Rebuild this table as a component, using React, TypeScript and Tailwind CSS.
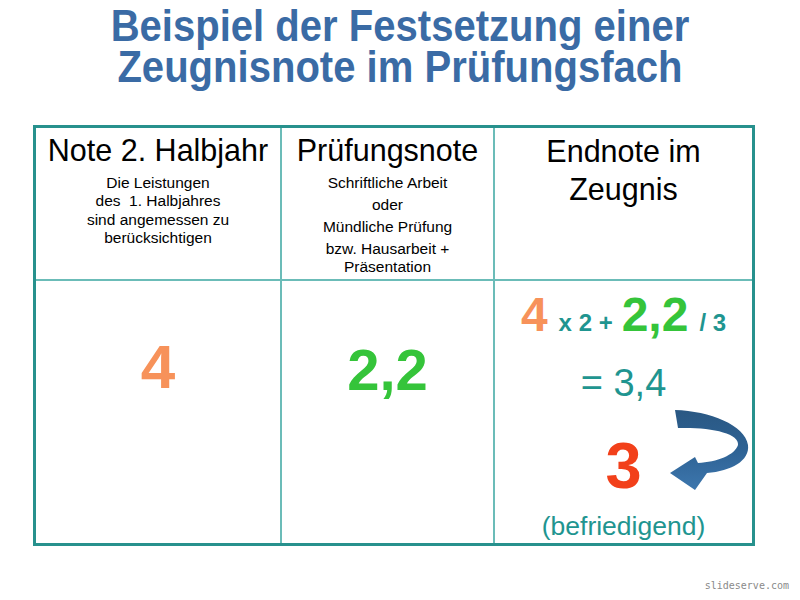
const teal = "text-[#1f9590]";

function CurvedArrow() {
  return (
    <svg width="88" height="90" viewBox="0 0 88 90" className="absolute left-[170px] top-[124px]">
      <defs>
        <linearGradient id="arrowGrad" x1="0" y1="0" x2="0" y2="1">
          <stop offset="0" stopColor="#2a5883" />
          <stop offset="0.5" stopColor="#2e6294" />
          <stop offset="1" stopColor="#3d77ae" />
        </linearGradient>
      </defs>
      <path
        d="M10 5 C45 6 80 20 83 40 C85 56 66 66 42 68 L30 85 L5 68 L30 52 L33 58 C52 57 70 50 73 40 C75 28 45 22 13 23 Z"
        fill="url(#arrowGrad)"
      />
    </svg>
  );
}

export default function App() {
  return (
    <div className="relative h-[600px] w-[800px] bg-white font-['Liberation_Sans',Arial,sans-serif]">
      <h1 className="scale-x-[0.89] pt-[5px] text-center text-[45px] font-bold leading-[41px] text-[#3a6ba5]">
        <div>Beispiel der Festsetzung einer</div>
        <div>Zeugnisnote im Prüfungsfach</div>
      </h1>

      <div className="ml-[33px] mt-[38px] grid w-[722px] grid-cols-[246px_213px_257px] grid-rows-[153px_262px] border-[3px] border-[#27918d] text-black">
        {/* header row */}
        <div className="flex flex-col items-center border-r-2 border-b-2 border-[#6bbcb8] pt-[5px] text-center">
          <div className="text-[30.5px] leading-[34px]">Note 2. Halbjahr</div>
          <div className="mt-[7px] text-[15.5px] leading-[18.3px]">
            Die Leistungen
            <br />
            des&nbsp; 1. Halbjahres
            <br />
            sind angemessen zu
            <br />
            berücksichtigen
          </div>
        </div>
        <div className="flex flex-col items-center border-r-2 border-b-2 border-[#6bbcb8] pt-[5px] text-center">
          <div className="text-[30.5px] leading-[34px]">Prüfungsnote</div>
          <div className="mt-[7px] flex flex-col gap-[4.5px] text-[15.5px] leading-[17.5px]">
            <p>Schriftliche Arbeit</p>
            <p>oder</p>
            <p>Mündliche Prüfung</p>
            <p>
              bzw. Hausarbeit +
              <br />
              Präsentation
            </p>
          </div>
        </div>
        <div className="border-b-2 border-[#6bbcb8] pt-[4px] text-center text-[30.5px] leading-[38px]">
          Endnote im
          <br />
          Zeugnis
        </div>

        {/* body row */}
        <div className="border-r-2 border-[#6bbcb8] pt-[51px] text-center text-[62px] font-bold leading-[70px] text-[#f7925a]">
          4
        </div>
        <div className="border-r-2 border-[#6bbcb8] pt-[54px] text-center text-[58px] font-bold leading-[70px] text-[#35c43a]">
          2,2
        </div>
        <div className="relative flex flex-col items-center pt-[8px]">
          <div className="flex h-[52px] items-baseline font-bold leading-[52px]">
            <span className="text-[48px] text-[#f7925a]">4</span>
            <span className={`ml-[11px] text-[24px] leading-[24px] ${teal}`}>x 2 +</span>
            <span className="ml-[9px] text-[48px] text-[#35c43a]">2,2</span>
            <span className={`ml-[11px] text-[24px] leading-[24px] ${teal}`}>/ 3</span>
          </div>
          <div className={`mt-[20px] text-[38px] leading-[44px] ${teal}`}>= 3,4</div>
          <div className="mt-[25px] text-[65px] font-bold leading-[72px] text-[#f2401a]">3</div>
          <div className={`mt-[8px] text-[26.5px] leading-[32px] ${teal}`}>(befriedigend)</div>
          <CurvedArrow />
        </div>
      </div>

      <div className="absolute right-[11px] top-[578px] font-['DejaVu_Sans_Mono',monospace] text-[10px] text-[#8a8a8a]">
        slideserve.com
      </div>
    </div>
  );
}
